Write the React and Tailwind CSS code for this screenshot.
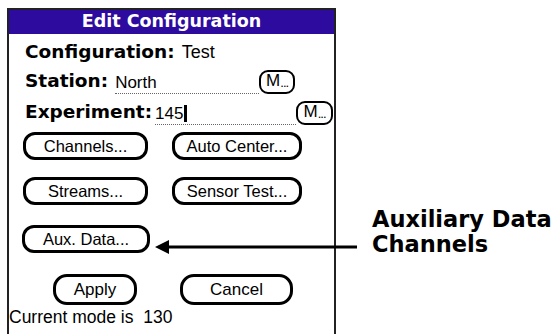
export default function App() {
  const btn =
    "flex items-center justify-center border-[3px] border-black bg-white rounded-[12px] text-[16.5px] text-black leading-none font-['Liberation_Sans',Arial,sans-serif]";
  const mbtn =
    "flex items-end justify-center pb-[3px] border-2 border-black bg-white rounded-[9px] h-[24px] text-[17px] text-black leading-none font-['Liberation_Sans',Arial,sans-serif]";
  return (
    <div className="relative w-[559px] h-[334px] bg-white flex overflow-hidden">
      <div className="ml-[7px] mt-[8px] w-[329px] h-[330px] shrink-0 border-t-2 border-l-2 border-r-2 border-[#222] flex flex-col">
        <div className="h-[24px] bg-[#2c0b9e] text-white font-bold text-[17.5px] flex items-center justify-center leading-none font-['DejaVu_Sans',Verdana,sans-serif]">
          Edit Configuration
        </div>

        <div className="mt-[6px] h-[24px] pl-[16px] flex items-center text-black leading-none">
          <span className="font-bold text-[18.5px] font-['DejaVu_Sans',Verdana,sans-serif]">Configuration:</span>
          <span className="ml-[7px] text-[18px] font-['Liberation_Sans',Arial,sans-serif]">Test</span>
        </div>

        <div className="mt-[6px] h-[24px] pl-[16px] flex items-end text-black leading-none">
          <span className="font-bold text-[18.5px] pb-[4px] font-['DejaVu_Sans',Verdana,sans-serif]">Station:</span>
          <span className="ml-[7px] w-[144px] h-[22px] flex items-end pb-[2px] border-b border-dotted border-[#666] text-[17px] font-['Liberation_Sans',Arial,sans-serif]">
            North
          </span>
          <span className={mbtn + " w-[36px]"}>
            M<span className="text-[13px] tracking-[-1px]">...</span>
          </span>
        </div>

        <div className="mt-[7px] h-[24px] pl-[16px] flex items-end text-black leading-none">
          <span className="font-bold text-[18.5px] pb-[4px] font-['DejaVu_Sans',Verdana,sans-serif]">Experiment:</span>
          <span className="ml-[3px] w-[141px] h-[22px] flex items-end pb-[2px] border-b border-dotted border-[#666] text-[17px] font-['Liberation_Sans',Arial,sans-serif]">
            145<span className="inline-block w-[3px] h-[17px] bg-black ml-[1px]"></span>
          </span>
          <span className={mbtn + " w-[37px]"}>
            M<span className="text-[13px] tracking-[-1px]">...</span>
          </span>
        </div>

        <div className="mt-[7px] h-[28px] pl-[14px] flex gap-[24px]">
          <div className={btn + " w-[125px] h-[28px]"}>Channels...</div>
          <div className={btn + " w-[130px] h-[28px]"}>Auto Center...</div>
        </div>

        <div className="mt-[17px] h-[28px] pl-[14px] flex gap-[24px]">
          <div className={btn + " w-[125px] h-[28px]"}>Streams...</div>
          <div className={btn + " w-[130px] h-[28px]"}>Sensor Test...</div>
        </div>

        <div className="mt-[20px] h-[28px] pl-[13px] flex">
          <div className={btn + " w-[128px] h-[28px]"}>Aux. Data...</div>
        </div>

        <div className="mt-[21px] h-[31px] pl-[44px] flex gap-[43px]">
          <div className={btn + " w-[84px] h-[31px] rounded-[14px] text-[17px]"}>Apply</div>
          <div className={btn + " w-[113px] h-[31px] rounded-[14px] text-[17px]"}>Cancel</div>
        </div>

        <div className="mt-[2px] h-[22px] flex items-center text-[17.5px] text-black leading-none whitespace-pre font-['Liberation_Sans',Arial,sans-serif]">
          {"Current mode is  130"}
        </div>
      </div>

      <div className="ml-[36px] mt-[207px] font-bold text-[22.5px] leading-[25px] text-black font-['DejaVu_Sans',Verdana,sans-serif]">
        <div>Auxiliary Data</div>
        <div>Channels</div>
      </div>

      <svg className="absolute left-[155px] top-[240px]" width="202" height="14" viewBox="0 0 202 14">
        <polygon points="0,7 14,0 14,14" fill="black" />
        <rect x="12" y="5.5" width="190" height="3" fill="black" />
      </svg>
    </div>
  );
}
